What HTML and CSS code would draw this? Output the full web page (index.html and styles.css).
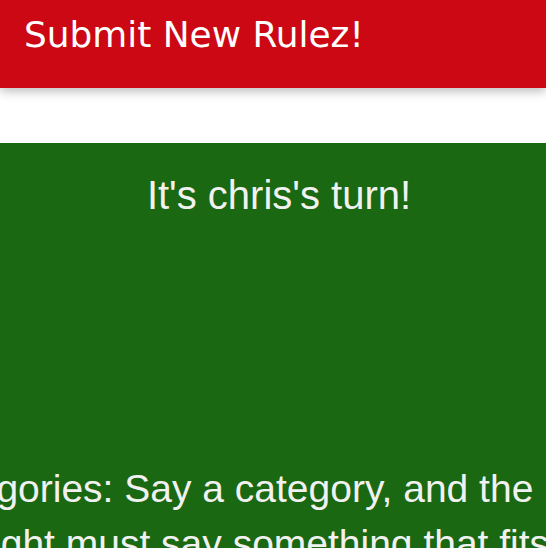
FILE: index.html
```html
<!DOCTYPE html>
<html>
<head>
<meta charset="utf-8">
<link rel="stylesheet" href="styles.css">
</head>
<body>
<header class="topbar">
  <h1 class="topbar-title">Submit New Rulez!</h1>
</header>
<main class="board">
  <p class="turn">It's chris's turn!</p>
  <div class="rule">
    <p class="rule-text"><span class="rule-line">Categories: Say a category, and the</span><span class="rule-line">the right must say something that fits the category</span></p>
  </div>
</main>
</body>
</html>
```
FILE: styles.css
```css
html, body {
  margin: 0;
  padding: 0;
  background: #ffffff;
  overflow: hidden;
}
.topbar {
  position: relative;
  z-index: 2;
  box-sizing: border-box;
  height: 88px;
  padding: 14px 24px 0;
  background: #cb0814;
  box-shadow: 0 3px 10px rgba(0, 0, 0, 0.28);
}
.topbar-title {
  margin: 0;
  font-family: "DejaVu Sans", sans-serif;
  font-weight: normal;
  font-size: 35.9px;
  color: #ffffff;
}
.board {
  margin-top: 55px;
  height: 405px;
  background: #1a6811;
  padding-top: 30px;
  box-sizing: border-box;
  font-family: "Liberation Sans", Arial, sans-serif;
  color: #f1f1f1;
  overflow: hidden;
}
.turn {
  margin: 0;
  font-size: 40px;
  text-align: center;
  padding-left: 12px;
}
.rule {
  margin-top: 243px;
  overflow: hidden;
}
.rule-text {
  margin: 0 0 0 -86px;
  font-size: 39px;
  line-height: 55px;
  white-space: nowrap;
}
.rule-line {
  display: block;
}
```
